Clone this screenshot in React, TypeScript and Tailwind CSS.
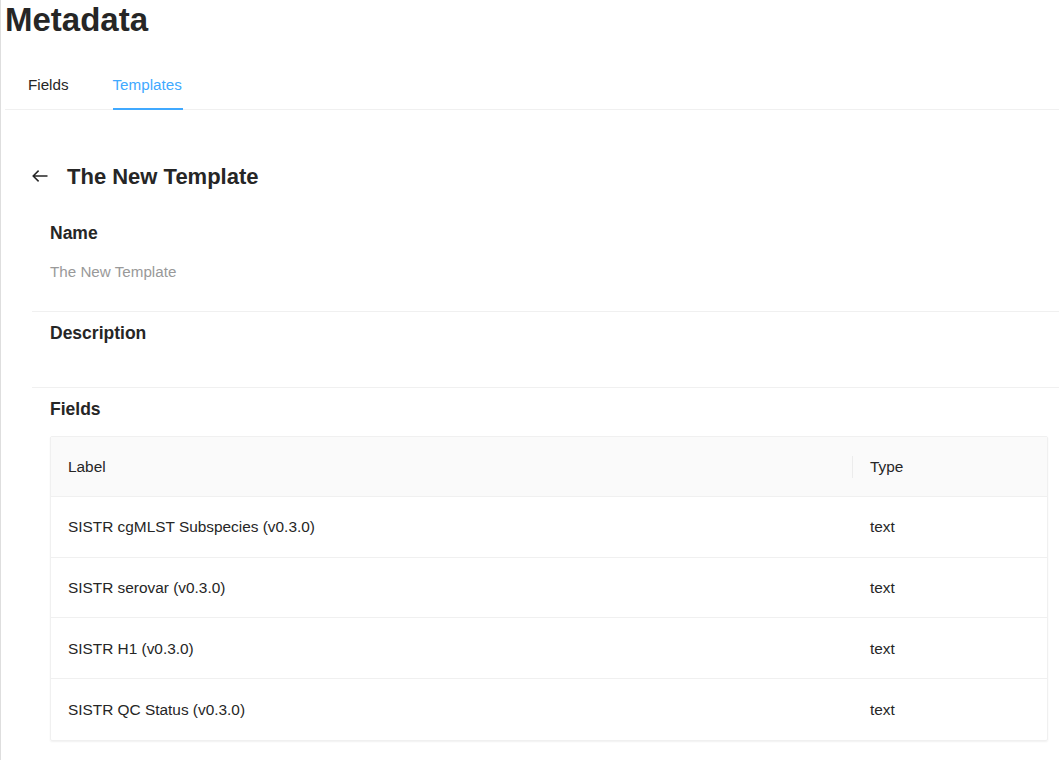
const FIELDS = [
  { label: 'SISTR cgMLST Subspecies (v0.3.0)', type: 'text' },
  { label: 'SISTR serovar (v0.3.0)', type: 'text' },
  { label: 'SISTR H1 (v0.3.0)', type: 'text' },
  { label: 'SISTR QC Status (v0.3.0)', type: 'text' },
];

function BackArrow() {
  return (
    <svg width="16" height="12" viewBox="0 0 16 12" fill="none" className="text-[#262626]">
      <path d="M15.5 6H1.2M6.6 0.6L1.2 6l5.4 5.4" stroke="currentColor" strokeWidth="1.5" />
    </svg>
  );
}

function FieldsTable() {
  return (
    <div className="border border-[#f0f0f0] rounded-[2px] shadow-[0_1px_2px_rgba(0,0,0,0.06)] overflow-hidden">
      {/* Header */}
      <div className="flex items-center h-[60px] pt-px bg-[#fafafa] border-b border-[#f0f0f0] text-[15.4px] text-[#262626]">
        <div className="flex-1 pl-[17px]">Label</div>
        <div className="w-px h-[22px] bg-[#ececec]" />
        <div className="w-[194px] pl-[17px]">Type</div>
      </div>
      {FIELDS.map((f, i) => (
        <div
          key={f.label}
          className={`flex items-center h-[60.7px] text-[15.4px] text-[#262626] ${
            i < FIELDS.length - 1 ? 'border-b border-[#f0f0f0]' : ''
          }`}
        >
          <div className="flex-1 pl-[17px]">{f.label}</div>
          <div className="w-[194px] pl-[17px]">{f.type}</div>
        </div>
      ))}
    </div>
  );
}

export default function App() {
  return (
    <div className="min-h-screen bg-white border-l border-[#dedede] pl-[4px] font-['Liberation_Sans',Arial,sans-serif] overflow-hidden">
      <h1 className="text-[33px] leading-[40px] font-bold text-[#262626]">Metadata</h1>

      {/* Tabs */}
      <div className="mt-[23px] flex border-b border-[#f0f0f0] pl-[23px] text-[15.2px]">
        <div className="h-[47px] -mb-px flex items-center border-b-2 border-transparent text-[#262626]">
          Fields
        </div>
        <div className="ml-[44px] h-[47px] -mb-px flex items-center border-b-2 border-[#40a9ff] text-[#40a9ff]">
          <span className="-ml-px pl-px pr-px">Templates</span>
        </div>
      </div>

      <div className="ml-[27px]">
        {/* Page header */}
        <div className="mt-[50px] flex items-center h-[32px]">
          <BackArrow />
          <span className="ml-[19px] text-[22px] font-bold text-[#262626]">The New Template</span>
        </div>

        {/* Name */}
        <div className="pt-[29px] pb-[28px] pl-[18px] pr-[11px] border-b border-[#f0f0f0]">
          <div className="text-[17.5px] leading-[24px] font-bold text-[#262626]">Name</div>
          <div className="mt-[16px] text-[15.2px] leading-[22px] text-[#999999]">The New Template</div>
        </div>

        {/* Description */}
        <div className="pt-[9px] pb-[42px] pl-[18px] pr-[11px] border-b border-[#f0f0f0]">
          <div className="text-[17.5px] leading-[24px] font-bold text-[#262626]">Description</div>
        </div>

        {/* Fields */}
        <div className="pt-[9px] pl-[18px] pr-[11px]">
          <div className="text-[17.5px] leading-[24px] font-bold text-[#262626]">Fields</div>
          <div className="mt-[15px]">
            <FieldsTable />
          </div>
        </div>
      </div>
    </div>
  );
}
